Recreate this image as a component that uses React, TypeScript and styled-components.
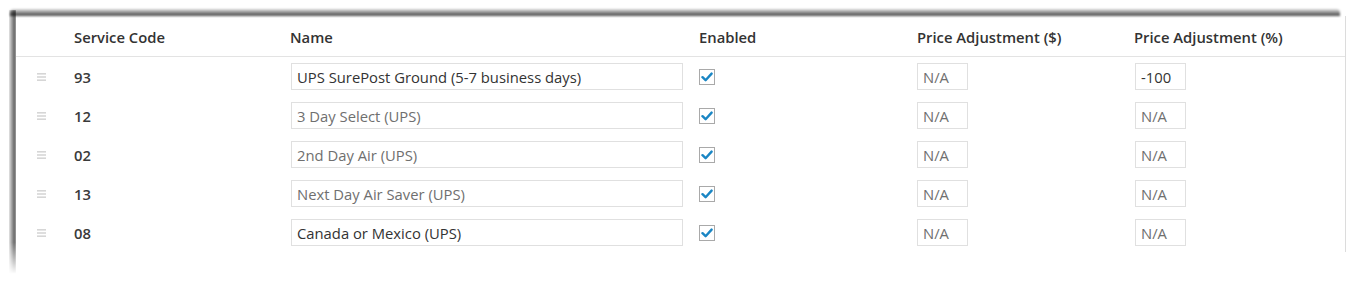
import styled, { createGlobalStyle } from "styled-components";

const GlobalStyle = createGlobalStyle`
  html, body {
    margin: 0;
    padding: 0;
    background: #fff;
  }
  body {
    font-family: "Open Sans", "Liberation Sans", sans-serif;
    color: #333;
  }
`;

const Page = styled.div`
  width: 1347px;
  height: 282px;
  padding: 16px 0 0 16px;
  box-sizing: border-box;
  overflow: hidden;
`;

// window frame: dark edge along the top and down the left side
const Card = styled.div`
  position: relative;
  width: 1330px;
  background: #fff;
  border-right: 1px solid #dcdcdc;
  box-sizing: border-box;

  &::before {
    content: "";
    position: absolute;
    left: -6px;
    top: -7px;
    width: 1330px;
    height: 7px;
    background: linear-gradient(to bottom, rgba(0, 0, 0, 0.12), rgba(0, 0, 0, 0.75));
    border-radius: 4px 4px 0 0;
    filter: blur(0.8px);
  }

  &::after {
    content: "";
    position: absolute;
    left: -7px;
    top: -6px;
    width: 7px;
    height: calc(100% + 28px);
    background: linear-gradient(to right, rgba(0, 0, 0, 0.12), rgba(0, 0, 0, 0.75));
    -webkit-mask-image: linear-gradient(to bottom, #000 88%, transparent);
    mask-image: linear-gradient(to bottom, #000 88%, transparent);
    filter: blur(0.8px);
  }
`;

const Grid = styled.div`
  display: grid;
  grid-template-columns: 58px 216px 409px 218px 217px 1fr;
`;

const HeadRow = styled(Grid)`
  height: 41px;
  padding-top: 1px;
  box-sizing: border-box;
  border-bottom: 1px solid #e3e3e3;
  align-items: center;
`;

const HeadCell = styled.div`
  font-size: 14.8px;
  font-weight: 600;
  color: #333;
`;

const Row = styled(Grid)`
  height: 39px;
  align-items: center;
`;

const Handle = styled.div`
  padding-left: 21px;
  display: flex;
  align-items: center;
`;

const Code = styled.div`
  font-size: 14.8px;
  font-weight: 600;
  color: #3a3a3a;
`;

const TextInput = styled.input<{ $width: number; $shift?: number }>`
  width: ${({ $width }) => $width}px;
  height: 27px;
  box-sizing: border-box;
  margin: 0 0 0 ${({ $shift }) => $shift ?? 0}px;
  padding: 0 5px;
  border: 1px solid #e0e0e0;
  border-radius: 0;
  background: #fff;
  font-family: "Open Sans", "Liberation Sans", sans-serif;
  font-size: 14.8px;
  color: #333;
  outline: none;
  &::placeholder {
    color: #6f6f6f;
    opacity: 1;
  }
`;

const CheckBox = styled.span`
  width: 16px;
  height: 16px;
  box-sizing: border-box;
  border: 1px solid #a9a9a9;
  background: #fff;
  display: flex;
  align-items: center;
  justify-content: center;
  margin-top: 1px;
`;

const Cell = styled.div`
  display: flex;
  align-items: center;
`;

const DragIcon = () => (
  <svg width="9" height="8" viewBox="0 0 9 8">
    <rect x="0" y="0" width="9" height="1.6" fill="#d6d6d6" />
    <rect x="0" y="3.2" width="9" height="1.6" fill="#d6d6d6" />
    <rect x="0" y="6.4" width="9" height="1.6" fill="#d6d6d6" />
  </svg>
);

const Check = () => (
  <CheckBox>
    <svg width="12" height="10" viewBox="0 0 12 10">
      <path
        d="M1.5 5.2 L4.6 8.2 L10.6 1.6"
        fill="none"
        stroke="#1a86c4"
        strokeWidth="2.4"
        strokeLinecap="round"
        strokeLinejoin="round"
      />
    </svg>
  </CheckBox>
);

type Service = {
  code: string;
  name: string;
  custom: boolean;
  percent?: string;
};

const services: Service[] = [
  { code: "93", name: "UPS SurePost Ground (5-7 business days)", custom: true, percent: "-100" },
  { code: "12", name: "3 Day Select (UPS)", custom: false },
  { code: "02", name: "2nd Day Air (UPS)", custom: false },
  { code: "13", name: "Next Day Air Saver (UPS)", custom: false },
  { code: "08", name: "Canada or Mexico (UPS)", custom: true },
];

export default function App() {
  return (
    <>
      <GlobalStyle />
      <Page>
        <Card>
          <HeadRow>
            <div />
            <HeadCell>Service Code</HeadCell>
            <HeadCell>Name</HeadCell>
            <HeadCell>Enabled</HeadCell>
            <HeadCell>Price Adjustment ($)</HeadCell>
            <HeadCell>Price Adjustment (%)</HeadCell>
          </HeadRow>
          {services.map((s) => (
            <Row key={s.code}>
              <Handle>
                <DragIcon />
              </Handle>
              <Code>{s.code}</Code>
              <Cell>
                {s.custom ? (
                  <TextInput $width={392} $shift={1} defaultValue={s.name} />
                ) : (
                  <TextInput $width={392} $shift={1} placeholder={s.name} />
                )}
              </Cell>
              <Cell>
                <Check />
              </Cell>
              <Cell>
                <TextInput $width={51} placeholder="N/A" />
              </Cell>
              <Cell>
                {s.percent ? (
                  <TextInput $width={51} $shift={1} defaultValue={s.percent} />
                ) : (
                  <TextInput $width={51} $shift={1} placeholder="N/A" />
                )}
              </Cell>
            </Row>
          ))}
        </Card>
      </Page>
    </>
  );
}
